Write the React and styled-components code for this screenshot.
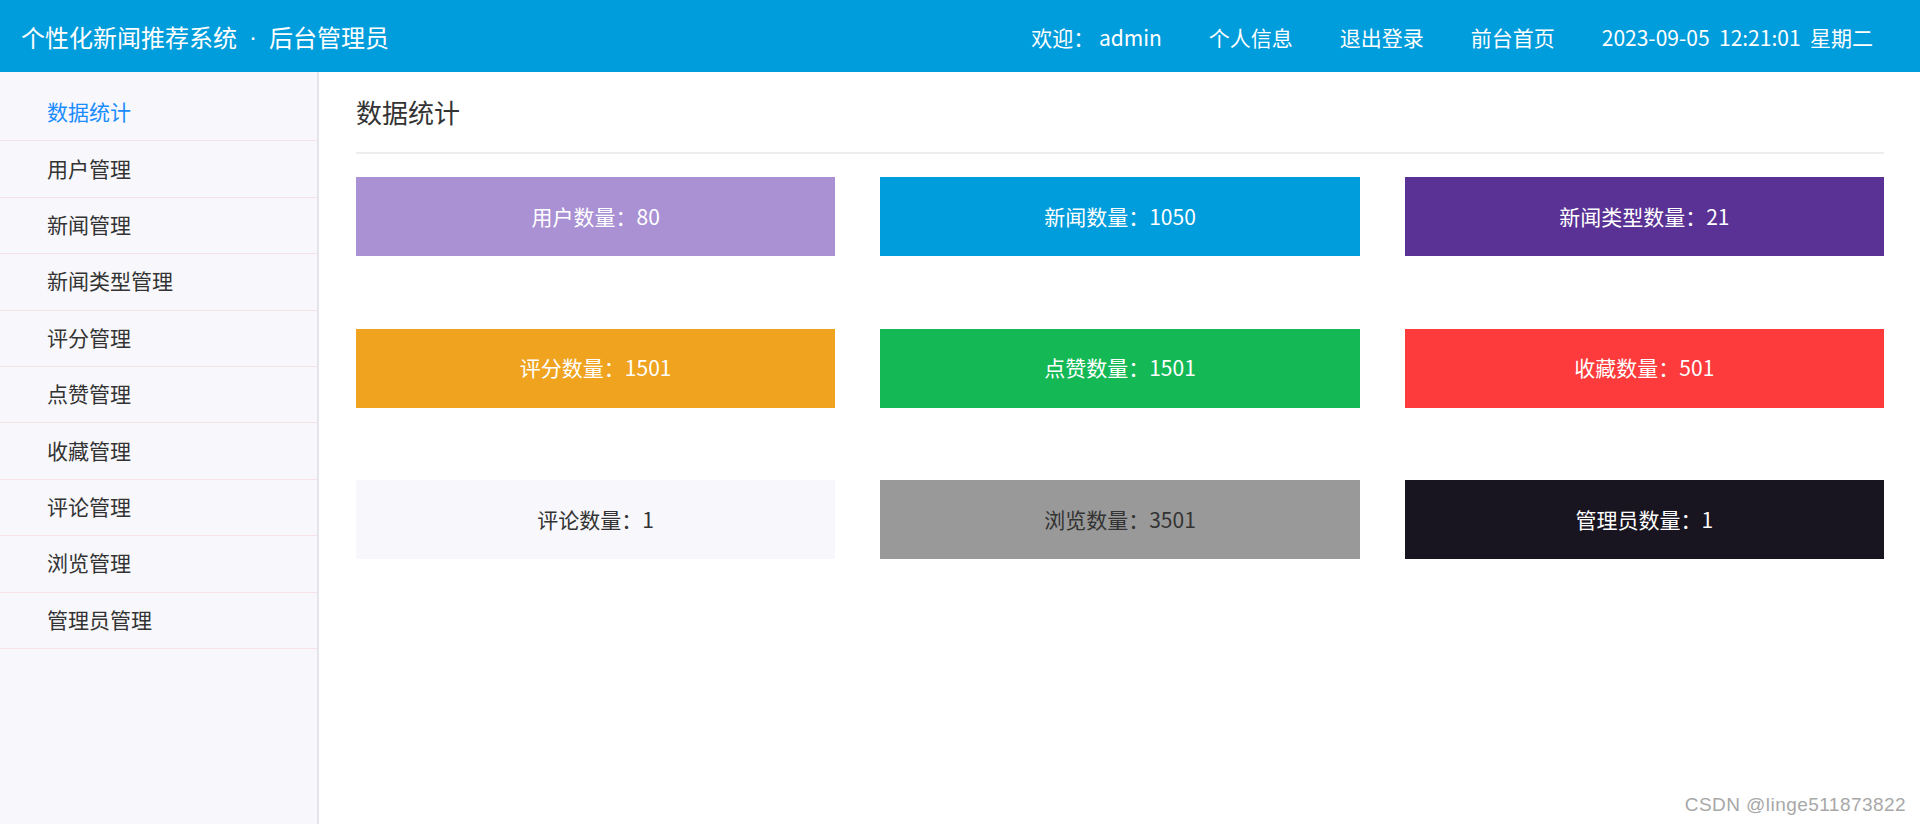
import React from "react";
import styled, { createGlobalStyle } from "styled-components";

const GlobalStyle = createGlobalStyle`
  html, body {
    margin: 0;
    padding: 0;
    background: #ffffff;
  }
  body {
    font-family: "Noto Sans CJK SC", "Microsoft YaHei", "Noto Sans", sans-serif;
    color: #333333;
  }
  * { box-sizing: border-box; }
`;

const Page = styled.div`
  position: relative;
  min-height: 100vh;
  display: flex;
  flex-direction: column;
`;

const Header = styled.header`
  height: 72px;
  flex: none;
  background: #009ddc;
  color: #ffffff;
  display: flex;
  align-items: center;
  justify-content: space-between;
  padding: 1px 47px 0 21px;
`;

const Title = styled.div`
  display: flex;
  align-items: center;
  font-size: 24px;
  line-height: 32px;
  padding-top: 1px;
  white-space: pre;
`;

const Dot = styled.span`
  font-family: "Liberation Sans", Arial, sans-serif;
  padding: 0 12px;
`;

const Nav = styled.nav`
  display: flex;
  align-items: center;
  gap: 47px;
  font-size: 21px;
  line-height: 30px;
`;

const NavText = styled.span`
  white-space: pre;
  cursor: pointer;
`;

const Body = styled.div`
  flex: 1;
  display: flex;
`;

const Sidebar = styled.aside`
  width: 319px;
  flex: none;
  background: #f8f8fc;
  border-right: 2px solid #e4e4ec;
  padding-top: 13px;
`;

const MenuItem = styled.div`
  height: 56.4px;
  display: flex;
  align-items: center;
  padding-left: 47px;
  padding-bottom: 3px;
  border-bottom: 1px solid #f5e2e5;
  font-size: 21px;
  color: ${(p) => (p.$active ? "#1a8cff" : "#333333")};
  cursor: pointer;
`;

const Main = styled.main`
  flex: 1;
  padding: 0 36px 0 37px;
`;

const Heading = styled.h2`
  margin: 0;
  height: 82px;
  padding-bottom: 2px;
  display: flex;
  align-items: center;
  font-size: 26px;
  font-weight: normal;
  color: #333333;
  border-bottom: 2px solid #ededed;
`;

const Grid = styled.div`
  margin-top: 23px;
  display: grid;
  grid-template-columns: repeat(3, 1fr);
  column-gap: 45px;
  row-gap: 72.5px;
`;

const Card = styled.div`
  height: 79px;
  display: flex;
  align-items: center;
  justify-content: center;
  padding-bottom: 2px;
  font-size: 21px;
  background: ${(p) => p.$bg};
  color: ${(p) => p.$fg};
`;

const Watermark = styled.div`
  position: absolute;
  right: 14px;
  bottom: 8px;
  font-family: "Liberation Sans", Arial, sans-serif;
  font-size: 19px;
  letter-spacing: 0.45px;
  color: #a8a8a8;
  text-shadow: 0 0 1px rgba(255, 255, 255, 0.8);
`;

const menu = [
  "数据统计",
  "用户管理",
  "新闻管理",
  "新闻类型管理",
  "评分管理",
  "点赞管理",
  "收藏管理",
  "评论管理",
  "浏览管理",
  "管理员管理",
];

const stats = [
  { label: "用户数量", value: 80, bg: "#a991d4", fg: "#ffffff" },
  { label: "新闻数量", value: 1050, bg: "#009ddc", fg: "#ffffff" },
  { label: "新闻类型数量", value: 21, bg: "#5a3194", fg: "#ffffff" },
  { label: "评分数量", value: 1501, bg: "#f0a31e", fg: "#ffffff" },
  { label: "点赞数量", value: 1501, bg: "#14b956", fg: "#ffffff" },
  { label: "收藏数量", value: 501, bg: "#fd3a3c", fg: "#ffffff" },
  { label: "评论数量", value: 1, bg: "#f8f8fc", fg: "#333333" },
  { label: "浏览数量", value: 3501, bg: "#999999", fg: "#333333" },
  { label: "管理员数量", value: 1, bg: "#181520", fg: "#ffffff" },
];

export default function App() {
  return (
    <>
      <GlobalStyle />
      <Page>
        <Header>
          <Title>
            个性化新闻推荐系统<Dot>·</Dot>后台管理员
          </Title>
          <Nav>
            <NavText>{"欢迎： admin"}</NavText>
            <NavText>个人信息</NavText>
            <NavText>退出登录</NavText>
            <NavText>前台首页</NavText>
            <NavText>{"2023-09-05  12:21:01  星期二"}</NavText>
          </Nav>
        </Header>
        <Body>
          <Sidebar>
            {menu.map((m, i) => (
              <MenuItem key={m} $active={i === 0}>
                {m}
              </MenuItem>
            ))}
          </Sidebar>
          <Main>
            <Heading>数据统计</Heading>
            <Grid>
              {stats.map((s) => (
                <Card key={s.label} $bg={s.bg} $fg={s.fg}>
                  {s.label}：{s.value}
                </Card>
              ))}
            </Grid>
          </Main>
        </Body>
        <Watermark>CSDN @linge511873822</Watermark>
      </Page>
    </>
  );
}
